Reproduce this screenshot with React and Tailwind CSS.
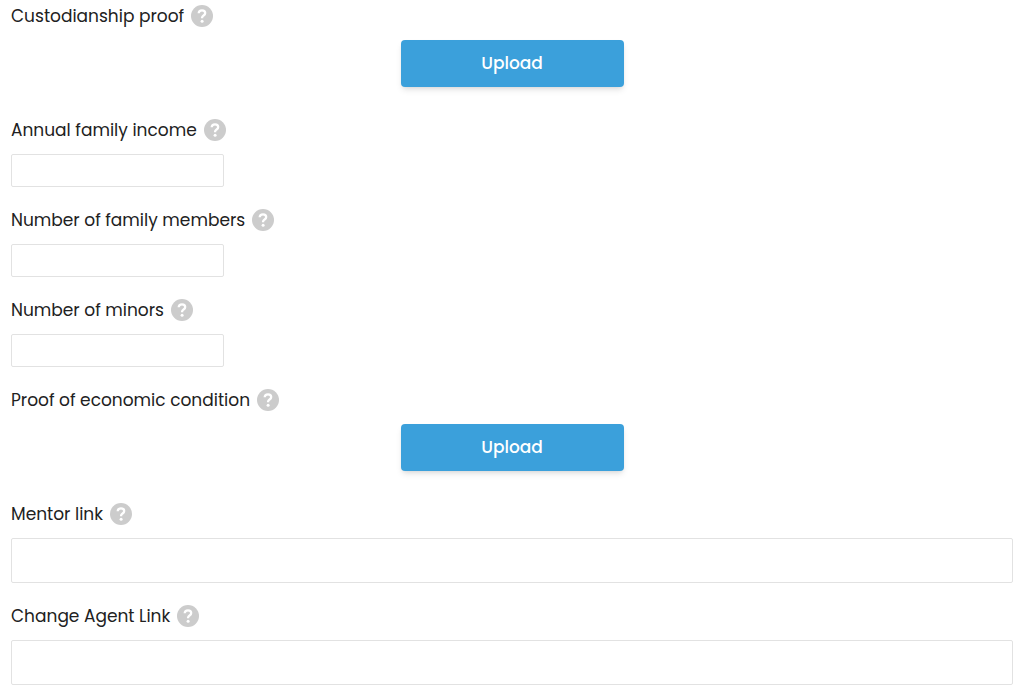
import React from "react";

const fields = [
  { id: "custodianship-proof", label: "Custodianship proof", type: "upload" },
  { id: "family-income", label: "Annual family income", type: "short" },
  { id: "family-members", label: "Number of family members", type: "short" },
  { id: "minors", label: "Number of minors", type: "short" },
  { id: "economic-proof", label: "Proof of economic condition", type: "upload" },
  { id: "mentor-link", label: "Mentor link", type: "long" },
  { id: "change-agent-link", label: "Change Agent Link", type: "long" },
];

function HelpIcon() {
  return (
    <svg viewBox="0 0 22 22" className="size-[22px] shrink-0" aria-hidden="true">
      <circle cx="11" cy="11" r="11" fill="#cccccc" />
      <path
        d="M7.7 8.2C7.8 6.4 9.2 5.3 11 5.3c1.9 0 3.2 1.1 3.2 2.7 0 1.2-.7 1.9-1.6 2.5-.9.6-1.5 1.1-1.5 2.1v.7"
        fill="none"
        stroke="#fff"
        strokeWidth="2.3"
      />
      <circle cx="11.1" cy="16.3" r="1.5" fill="#fff" />
    </svg>
  );
}

function FieldControl({ id, type }) {
  if (type === "upload") {
    return (
      <button
        id={id}
        type="button"
        className="mx-auto mb-[10px] block h-[47px] w-full max-w-[223px] cursor-pointer rounded bg-[#3ba0db] text-[17px] font-medium text-white shadow-md"
      >
        Upload
      </button>
    );
  }

  // Numbers get a narrow box, links take the whole row
  return (
    <input
      id={id}
      type="text"
      className={
        type === "short"
          ? "block h-[33px] w-full max-w-[213px] rounded-xs border border-[#e2e2e2] bg-white px-2 text-base outline-none"
          : "block h-[45px] w-full rounded-xs border border-[#e2e2e2] bg-white px-3 text-base outline-none"
      }
    />
  );
}

export default function App() {
  return (
    <form className="flex min-h-screen flex-col gap-[22px] bg-white px-[11px] pt-[5px] pb-[10px] font-['Poppins','Inter',sans-serif] text-[#212121]">
      {fields.map((field) => (
        <div key={field.id}>
          <div className="mb-[13px] flex items-center gap-[7px]">
            <label htmlFor={field.id} className="text-[17px] leading-[22px]">
              {field.label}
            </label>
            <HelpIcon />
          </div>
          <FieldControl id={field.id} type={field.type} />
        </div>
      ))}
    </form>
  );
}
